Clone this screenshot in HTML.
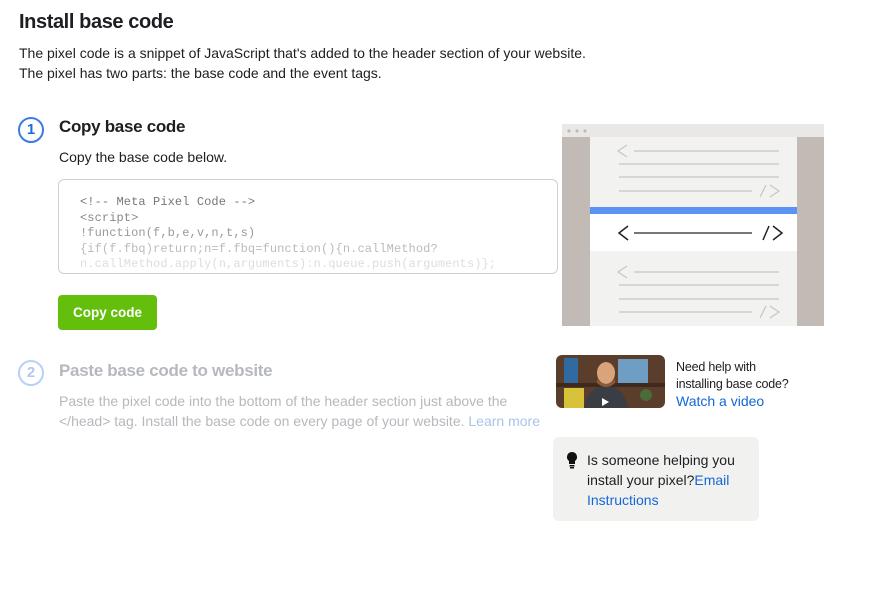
<!DOCTYPE html>
<html><head><meta charset="utf-8"><style>
*{margin:0;padding:0;box-sizing:border-box}
body{width:876px;height:607px;background:#fff;font-family:"Liberation Sans",sans-serif;color:#1c1e21;position:relative;overflow:hidden}
.a{position:absolute;white-space:nowrap}
.p{font-size:14px;letter-spacing:0px;line-height:20px}
.circ{position:absolute;width:26px;height:26px;border-radius:50%;border:2px solid;font-size:15px;font-weight:bold;text-align:center;line-height:22px}
.mono{font-family:"Liberation Mono",monospace;font-size:12px;line-height:15.5px;letter-spacing:0.1px}
a{color:#1467d7;text-decoration:none}
</style></head><body>
<div class="a" style="left:19px;top:11px;font-size:20px;font-weight:bold;letter-spacing:-0.4px">Install base code</div>
<div class="a p" style="left:19px;top:43px">The pixel code is a snippet of JavaScript that's added to the header section of your website.</div>
<div class="a p" style="left:19px;top:63px">The pixel has two parts: the base code and the event tags.</div>

<div class="circ" style="left:18px;top:117px;border-color:#3b7be8;color:#1a6fd6">1</div>
<div class="a" style="left:59px;top:117px;font-size:17px;font-weight:bold;letter-spacing:-0.3px">Copy base code</div>
<div class="a p" style="left:59px;top:147px">Copy the base code below.</div>
<div class="a" style="left:58px;top:179px;width:500px;height:95px;border:1px solid #ccd0d5;border-radius:6px;overflow:hidden">
<div class="mono" style="position:absolute;left:21px;top:15px;color:#777">
<div>&lt;!-- Meta Pixel Code --&gt;</div>
<div style="color:#888">&lt;script&gt;</div>
<div style="color:#999">!function(f,b,e,v,n,t,s)</div>
<div style="color:#bbb">{if(f.fbq)return;n=f.fbq=function(){n.callMethod?</div>
<div style="color:#ddd">n.callMethod.apply(n,arguments):n.queue.push(arguments)};</div>
</div></div>
<div class="a" style="left:58px;top:295px;width:99px;height:35px;background:#64bf0c;border-radius:4px;color:#fff;font-weight:bold;font-size:13.5px;text-align:center;line-height:35px">Copy code</div>

<div class="circ" style="left:18px;top:360px;border-color:#b9cff5;color:#b3c7ee">2</div>
<div class="a" style="left:59px;top:361px;font-size:17px;font-weight:bold;color:#b5b8bd;letter-spacing:-0.3px">Paste base code to website</div>
<div class="a p" style="left:59px;top:391px;color:#b5b8bd">Paste the pixel code into the bottom of the header section just above the</div>
<div class="a p" style="left:59px;top:411px;color:#b5b8bd">&lt;/head&gt; tag. Install the base code on every page of your website. <span style="color:#a9c3ea">Learn more</span></div>

<svg class="a" style="left:562px;top:124px" width="262" height="202" viewBox="0 0 262 202">
<rect x="0" y="0" width="262" height="202" fill="#f2f2f1"/>
<rect x="0" y="0" width="262" height="13" fill="#e9e8e6"/>
<circle cx="7" cy="7" r="1.6" fill="#bbb"/><circle cx="15" cy="7" r="1.6" fill="#bbb"/><circle cx="23" cy="7" r="1.6" fill="#bbb"/>
<rect x="0" y="13" width="28" height="189" fill="#c2bbb5"/>
<rect x="235" y="13" width="27" height="189" fill="#c2bbb5"/>
<rect x="28" y="83" width="207" height="7" fill="#5b93f5"/>
<rect x="28" y="90" width="207" height="37" fill="#fff"/>
<g stroke="#c9c6c2" stroke-width="1.2" fill="none">
<path d="M65 21l-9 6 9 6M72 27h145M57 40h160M57 53h160M57 67h133M198 73l6-12M208 61l9 6-9 6"/>
<path d="M65 142l-9 6 9 6M72 148h145M57 161h160M57 175h160M57 188h133M198 194l6-12M208 182l9 6-9 6"/>
</g>
<g stroke="#222" stroke-width="1.5" fill="none">
<path d="M66 102l-9 7 9 7M201 116l6-14M211 102l9 7-9 7"/></g>
<path d="M72 109h118" stroke="#777" stroke-width="2"/>
</svg>

<svg class="a" style="left:556px;top:355px" width="109" height="53" viewBox="0 0 109 53">
<defs><clipPath id="c"><rect width="109" height="53" rx="6"/></clipPath></defs>
<g clip-path="url(#c)">
<rect width="109" height="53" fill="#5a3d2b"/>
<rect x="8" y="3" width="14" height="25" fill="#2f6aa0"/>
<rect x="62" y="4" width="30" height="24" fill="#6f9ec4"/>
<rect x="8" y="33" width="20" height="20" fill="#d8c23a"/>
<rect x="0" y="28" width="109" height="4" fill="#3d2a1d"/>
<circle cx="90" cy="40" r="6" fill="#4a6b3a"/>
<ellipse cx="50" cy="18" rx="9" ry="11" fill="#d9a37c"/>
<path d="M28 53q4-22 22-22t22 22z" fill="#3a3d44"/>
<path d="M41 24q9 10 18 0v4q-9 8-18 0z" fill="#8a5a3a"/>
<polygon points="46,43 46,51 53,47" fill="#fff"/>
</g></svg>
<div class="a" style="left:676px;top:359px;font-size:12.5px;line-height:17px;letter-spacing:-0.2px">Need help with<br>installing base code?</div>
<div class="a" style="left:676px;top:393px;font-size:14px"><a>Watch a video</a></div>

<div class="a" style="left:553px;top:437px;width:206px;height:84px;background:#f1f1f0;border-radius:6px"></div>
<svg class="a" style="left:566px;top:451px" width="12" height="18" viewBox="0 0 12 18"><path d="M6 1a5 5 0 0 0-3 9v3h6v-3a5 5 0 0 0-3-9z" fill="#111"/><rect x="3.5" y="14" width="5" height="1.5" fill="#111"/><rect x="4" y="16" width="4" height="1.5" fill="#111"/></svg>
<div class="a p" style="left:587px;top:450px;line-height:20px;white-space:normal;width:170px">Is someone helping you install your pixel?<a>Email Instructions</a></div>
</body></html>
